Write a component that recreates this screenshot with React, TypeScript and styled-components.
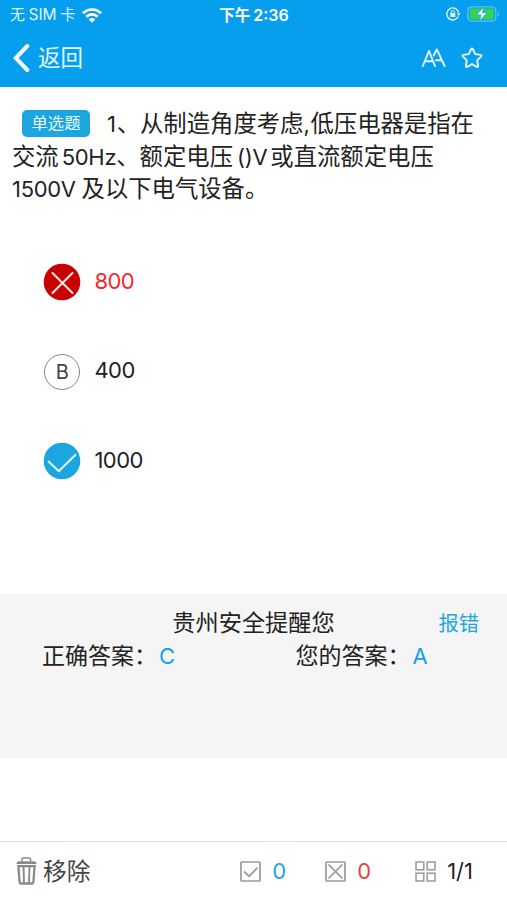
import React from 'react';
import styled, { createGlobalStyle } from 'styled-components';

const GlobalStyle = createGlobalStyle`
  * { box-sizing: border-box; }
  body { margin: 0; background: #fff; }
`;

const Screen = styled.div`
  width: 507px;
  height: 900px;
  display: flex;
  flex-direction: column;
  overflow: hidden;
  background: #fff;
  color: #222;
  font-family: Inter, "Noto Sans CJK SC", sans-serif;
`;

const Header = styled.header`
  height: 87px;
  flex: none;
  background: #069fed;
  color: #fff;
`;

const StatusBar = styled.div`
  height: 30px;
  display: grid;
  grid-template-columns: 1fr auto 1fr;
  align-items: center;
  padding: 0 7px 0 10px;
`;

const Carrier = styled.div`
  display: flex;
  align-items: center;
  gap: 7px;
  line-height: 30px;
  color: #dff4ff;
`;

const CarrierName = styled.span`
  display: flex;
  gap: 3.5px;
  font-size: 15px;
`;

const CarrierCode = styled.span`
  font-size: 15.5px;
`;

const Clock = styled.div`
  font-size: 16px;
  font-weight: 600;
  line-height: 29px;
  display: flex;
  gap: 3px;
`;

const Meridiem = styled.span`
  font-size: 15.5px;
  margin-left: -2px;
`;

const StatusIcons = styled.div`
  display: flex;
  justify-content: flex-end;
  align-items: center;
  gap: 6px;
  margin-top: -2px;
`;

const NavBar = styled.nav`
  height: 56px;
  display: flex;
  align-items: center;
  justify-content: space-between;
  padding: 0 24px 0 12px;
`;

const BackButton = styled.div`
  display: flex;
  align-items: center;
  gap: 8px;
  font-size: 22.5px;
  line-height: 56px;
  color: #e6f6ff;
`;

const NavActions = styled.div`
  display: flex;
  align-items: center;
  gap: 15px;
`;

const Question = styled.section`
  height: 156px;
  flex: none;
  padding: 21px 12px 0;
`;

const Line = styled.div`
  height: 32.5px;
  display: flex;
  align-items: center;
  white-space: nowrap;
  font-size: 23.35px;
  line-height: 32.5px;
`;

const Latin = styled.span<{ $gap?: number; $after?: number }>`
  font-size: 22px;
  letter-spacing: -0.3px;
  margin-left: ${(p) => p.$gap ?? 0}px;
  margin-right: ${(p) => p.$after ?? 0}px;
`;

const Badge = styled.span`
  width: 68px;
  height: 27px;
  margin: -2px 17px 0 10px;
  border-radius: 5px;
  background: #1ba6e0;
  color: #e9f8ff;
  font-size: 16.3px;
  line-height: 27px;
  text-align: center;
`;

const Options = styled.section`
  height: 351px;
  flex: none;
  padding: 20px 0 0 43px;
`;

const Option = styled.div<{ $wrong?: boolean }>`
  height: 38px;
  margin-bottom: 51.5px;
  display: flex;
  align-items: center;
  gap: 13.5px;
  font-size: 22px;
  letter-spacing: -0.6px;
  color: ${(p) => (p.$wrong ? '#f22a2c' : '#222')};
`;

const OptionText = styled.span`
  line-height: 34px;
  margin-bottom: 3px;
`;

const Result = styled.section`
  height: 164px;
  flex: none;
  background: #f5f5f5;
  padding-top: 11px;
`;

const ResultTitle = styled.div`
  height: 34px;
  display: grid;
  grid-template-columns: 1fr auto 1fr;
  align-items: center;
  font-size: 23.2px;
  line-height: 34px;
`;

const Report = styled.span`
  grid-column: 3;
  justify-self: end;
  margin-right: 28px;
  padding-top: 2px;
  font-size: 20.3px;
  color: #22a5e6;
`;

const Title = styled.span`
  grid-column: 2;
`;

const Answers = styled.div`
  display: grid;
  grid-template-columns: 253.5px 1fr;
  padding-left: 42px;
  font-size: 23px;
  line-height: 34px;
`;

const Answer = styled.div`
  display: flex;
`;

const AnswerLabel = styled.span`
  width: 117px;
  white-space: nowrap;
`;

const AnswerValue = styled.span`
  font-size: 22px;
  color: #159fe8;
`;

const Footer = styled.footer`
  margin-top: auto;
  height: 59px;
  flex: none;
  border-top: 1px solid #e4e4e4;
  display: flex;
  align-items: center;
  justify-content: space-between;
  padding: 0 34px 0 16px;
`;

const Remove = styled.div`
  display: flex;
  align-items: center;
  gap: 6px;
  font-size: 23.7px;
  color: #444;
`;

const RemoveLabel = styled.span`
  line-height: 56px;
  padding-top: 2px;
`;

const Stats = styled.div`
  display: flex;
  align-items: center;
`;

const Stat = styled.div<{ $color: string; $width?: number }>`
  width: ${(p) => (p.$width ? `${p.$width}px` : 'auto')};
  display: flex;
  align-items: center;
  gap: 11px;
  font-size: 22px;
  color: ${(p) => p.$color};
`;

const Wifi = () => (
  <svg width="20" height="15" viewBox="0 0 20 15" fill="none" stroke="#fff" strokeWidth="2.7">
    <path d="M1 5.3C6 .2 14 .2 19 5.3" />
    <path d="M4.3 8.8c3.2-3.2 8.2-3.2 11.4 0" />
    <path d="M6.7 11.5c1.8-2 4.8-2 6.6 0L10 14.8z" fill="#fff" stroke="none" />
  </svg>
);

const RotationLock = () => (
  <svg width="15" height="14" viewBox="0 0 15 14" fill="none" stroke="#e3f5ff" strokeWidth="1.4">
    <path d="M12.2 9.5A6 6 0 1 1 12.6 5.5" />
    <path d="M10.8 6.3h3.7l-1.8 2.6z" fill="#e3f5ff" stroke="none" />
    <rect x="4.3" y="6" width="5" height="4" fill="#e3f5ff" stroke="none" />
    <path d="M5.3 6.3V5a1.5 1.5 0 0 1 3 0v1.3" strokeWidth="1" />
  </svg>
);

const Battery = () => (
  <svg width="33" height="16" viewBox="0 0 33 16">
    <rect x=".8" y=".8" width="28" height="14.4" rx="4" fill="none" stroke="#65bff0" strokeWidth="1.3" />
    <rect x="2.6" y="2.6" width="24.4" height="10.8" rx="2.2" fill="#32d158" />
    <path d="M30.8 5.5c1.8.6 1.8 4.4 0 5z" fill="#65bff0" />
    <path d="M16.5 1.2 9.6 8.8h4.5l-1.4 6 7.3-8h-4.7z" fill="#fff" stroke="#069fed" strokeWidth=".6" />
  </svg>
);

const Chevron = () => (
  <svg width="18" height="30" viewBox="0 0 18 30" fill="none" stroke="#f3fbff" strokeWidth="4" strokeLinecap="round" strokeLinejoin="miter">
    <path d="M15.3 3 3.8 15l11.5 12" />
  </svg>
);

const TextSize = () => (
  <svg width="25" height="20" viewBox="0 0 25 20" fill="none" stroke="#e8f7ff" strokeWidth="1.9" strokeLinecap="round" strokeLinejoin="round">
    <path d="M1.8 18 8 3l6 15M3.8 13.2h8.2" />
    <path d="M12.7 7.5 15.8 1.4 23.6 18M15 12.2h5.6" />
  </svg>
);

const Star = () => (
  <svg width="22" height="22" viewBox="0 0 22 22" fill="none" stroke="#e8f7ff" strokeWidth="1.9" strokeLinejoin="round">
    <path d="M10.2 2q.8-1.3 1.6 0l2.4 5.1 5.5.8q1.5.3.5 1.4l-4 4 .9 5.6q.1 1.5-1.2.9L11 17.2l-4.9 2.6q-1.3.6-1.2-.9l.9-5.6-4-4q-1-1.1.5-1.4l5.5-.8z" />
  </svg>
);

const WrongMark = () => (
  <svg width="38" height="38" viewBox="0 0 38 38" fill="none">
    <circle cx="19" cy="19" r="18.3" fill="#c80203" />
    <path d="m9.5 10 20 20M29.5 10l-20 20" stroke="#ffe9e6" strokeWidth="2" strokeLinecap="round" />
  </svg>
);

const LetterRing = styled.span`
  width: 36px;
  height: 36px;
  margin: 0 1px;
  border: 1.5px solid #858585;
  border-radius: 50%;
  display: flex;
  align-items: center;
  justify-content: center;
  font-size: 20px;
  color: #444;
`;

const RightMark = () => (
  <svg width="38" height="38" viewBox="0 0 38 38" fill="none">
    <circle cx="19" cy="19" r="18.3" fill="#1ba6e0" />
    <path d="m5 19 10.8 10.2L33 12.2" stroke="#e6f8ff" strokeWidth="2" />
  </svg>
);

const Trash = () => (
  <svg width="21" height="28" viewBox="0 0 21 28" fill="none" stroke="#8a8a8a">
    <path d="M6 4.5V1.8Q6 1 7 1h6.5q1 0 1 .8v2.7" strokeWidth="1.5" />
    <path d="M.5 7Q.5 4.2 3 4.2h15q2.5 0 2.5 2.8z" fill="#8a8a8a" stroke="none" />
    <path d="M2.4 9.2h16.2L17.4 25q-.1 1.5-1.6 1.5H5.2q-1.5 0-1.6-1.5z" strokeWidth="2.3" />
    <path d="m7.5 9 .5 17M13.5 9 13 26" strokeWidth="1.9" />
  </svg>
);

const CheckBox = () => (
  <svg width="21" height="21" viewBox="0 0 21 21" fill="none" stroke="#999" strokeWidth="1.7">
    <rect x="1" y="1" width="19" height="19" rx=".8" />
    <path d="m4 10.5 5.2 4.7 8.2-8.5" />
  </svg>
);

const CrossBox = () => (
  <svg width="21" height="21" viewBox="0 0 21 21" fill="none" stroke="#999" strokeWidth="1.7">
    <rect x="1" y="1" width="19" height="19" rx=".8" />
    <path d="m3.5 3.5 14 14M17.5 3.5l-14 14" />
  </svg>
);

const GridIcon = () => (
  <svg width="21" height="21" viewBox="0 0 21 21" fill="none" stroke="#999" strokeWidth="1.5">
    <rect x="1" y="1" width="7.8" height="7.8" />
    <rect x="12.2" y="1" width="7.8" height="7.8" />
    <rect x="1" y="12.2" width="7.8" height="7.8" />
    <rect x="12.2" y="12.2" width="7.8" height="7.8" />
  </svg>
);

export default function App() {
  return (
    <Screen>
      <GlobalStyle />
      <Header>
        <StatusBar>
          <Carrier>
            <CarrierName><span>无</span><CarrierCode>SIM</CarrierCode><span>卡</span></CarrierName>
            <Wifi />
          </Carrier>
          <Clock><Meridiem>下午</Meridiem><span>2:36</span></Clock>
          <StatusIcons><RotationLock /><Battery /></StatusIcons>
        </StatusBar>
        <NavBar>
          <BackButton><Chevron /><span>返回</span></BackButton>
          <NavActions><TextSize /><Star /></NavActions>
        </NavBar>
      </Header>
      <Question>
        <Line><Badge>单选题</Badge><Latin $after={1}>1</Latin>、从制造角度考虑<Latin $after={1}>,</Latin>低压电器是指在</Line>
        <Line>交流<Latin $gap={3}>50Hz</Latin>、额定电压<Latin $gap={4} $after={3}>()V</Latin>或直流额定电压</Line>
        <Line><Latin $after={6}>1500V</Latin>及以下电气设备。</Line>
      </Question>
      <Options>
        <Option $wrong><WrongMark /><OptionText>800</OptionText></Option>
        <Option><LetterRing>B</LetterRing><OptionText>400</OptionText></Option>
        <Option><RightMark /><OptionText>1000</OptionText></Option>
      </Options>
      <Result>
        <ResultTitle><Title>贵州安全提醒您</Title><Report>报错</Report></ResultTitle>
        <Answers>
          <Answer><AnswerLabel>正确答案：</AnswerLabel><AnswerValue>C</AnswerValue></Answer>
          <Answer><AnswerLabel>您的答案：</AnswerLabel><AnswerValue>A</AnswerValue></Answer>
        </Answers>
      </Result>
      <Footer>
        <Remove><Trash /><RemoveLabel>移除</RemoveLabel></Remove>
        <Stats>
          <Stat $color="#22a5e6" $width={85}><CheckBox /><span>0</span></Stat>
          <Stat $color="#e8433c" $width={90}><CrossBox /><span>0</span></Stat>
          <Stat $color="#222"><GridIcon /><span>1/1</span></Stat>
        </Stats>
      </Footer>
    </Screen>
  );
}
